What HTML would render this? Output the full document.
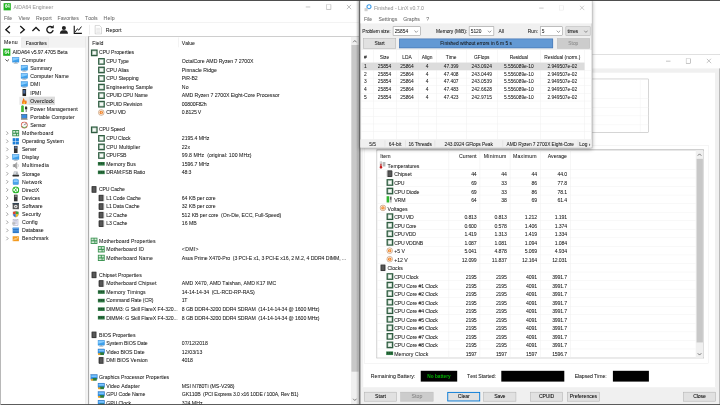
<!DOCTYPE html><html><head><meta charset="utf-8"><title>AIDA64 Engineer</title><style>
*{box-sizing:border-box;margin:0;padding:0}
html,body{width:720px;height:405px;overflow:hidden;background:#fff}
body{font-family:"Liberation Sans",sans-serif;font-size:11.5px;color:#000}
#root{filter:opacity(1);position:absolute;left:0;top:0;width:1600px;height:900px;transform:scale(.45);transform-origin:0 0;overflow:hidden;background:#fff}
.a{position:absolute}
.t{position:absolute;white-space:pre;line-height:18px;height:18px;font-kerning:none;-webkit-text-stroke:.09px;color:#141414}
.r{text-align:right}
.c{text-align:center}
.ic{position:absolute;width:16px;height:16px}
.cpu{position:absolute;width:15px;height:15px;border:3.800px solid #2f5c41;background:#f6faf6;outline:1px solid #9db8a6;outline-offset:-4.800px}
.btn{position:absolute;border:1px solid #adadad;background:#e1e1e1;text-align:center;white-space:pre}
.hl{position:absolute;height:1px;background:#f0f0f0}
.vl{position:absolute;width:1px;background:#f0f0f0}
</style></head><body><div id="root">
<div class="a" id="aida" style="left:0;top:0;width:798px;height:900px;background:#fff;overflow:hidden">
<div class="a" style="left:8px;top:7px;width:16px;height:16px;background:#21b421;color:#fff;font-size:10px;font-weight:bold;line-height:16px;text-align:center;letter-spacing:-.5px">64</div>
<div class="t" style="left:30px;top:7px;color:#999;letter-spacing:-0.057px">AIDA64 Engineer</div>
<svg class="a" style="left:770px;top:10px" width="12" height="12" viewBox="0 0 12 12"><path d="M0.500 0.500 L10.500 10.500 M10.500 0.500 L0.500 10.500" stroke="#8a8a8a" stroke-width="1.200" fill="none"/></svg>
<svg class="a" style="left:725px;top:10px" width="12" height="12" viewBox="0 0 12 12"><rect x="0.500" y="0.500" width="10" height="10" stroke="#8a8a8a" stroke-width="1.100" fill="none"/></svg>
<svg class="a" style="left:679px;top:10px" width="12" height="12" viewBox="0 0 12 12"><path d="M0 5.500 H10.500" stroke="#8a8a8a" stroke-width="1.100" fill="none"/></svg>
<div class="t" style="left:9px;top:32px;color:#6a6a6a;letter-spacing:-0.133px">File</div>
<div class="t" style="left:41px;top:32px;color:#6a6a6a;letter-spacing:0.018px">View</div>
<div class="t" style="left:80px;top:32px;color:#6a6a6a;letter-spacing:0.080px">Report</div>
<div class="t" style="left:128px;top:32px;color:#6a6a6a;letter-spacing:-0.032px">Favorites</div>
<div class="t" style="left:189px;top:32px;color:#6a6a6a;letter-spacing:-0.024px">Tools</div>
<div class="t" style="left:230px;top:32px;color:#6a6a6a;letter-spacing:0.337px">Help</div>
<div class="hl" style="left:0;top:50px;width:797px;background:#e4e4e4"></div>
<svg class="a" style="left:8px;top:55px" width="22" height="22" viewBox="0 0 22 22"><path d="M14 3 L5 11 L14 19" stroke="#1a1a1a" stroke-width="3" fill="none"/></svg>
<svg class="a" style="left:38px;top:55px" width="22" height="22" viewBox="0 0 22 22"><path d="M7 3 L16 11 L7 19" stroke="#1a1a1a" stroke-width="3" fill="none"/></svg>
<svg class="a" style="left:69px;top:55px" width="22" height="22" viewBox="0 0 22 22"><path d="M3 14 L11 6 L19 14" stroke="#1a1a1a" stroke-width="3" fill="none"/></svg>
<svg class="a" style="left:100px;top:55px" width="22" height="22" viewBox="0 0 22 22"><path d="M16.500 6.500 A7 7 0 1 0 18 12" stroke="#1a1a1a" stroke-width="3" fill="none"/><path d="M12 8 H19.500 V0.500 Z" fill="#1a1a1a"/></svg>
<svg class="a" style="left:131px;top:55px" width="22" height="22" viewBox="0 0 22 22"><circle cx="11" cy="7" r="4.5" fill="#222"/><path d="M2 20 C2 13 7 12 11 12 C15 12 20 13 20 20 Z" fill="#222"/></svg>
<svg class="a" style="left:162px;top:55px" width="22" height="22" viewBox="0 0 22 22"><path d="M3 2 V19 H20" stroke="#1a1a1a" stroke-width="2.600" fill="none"/><path d="M5 16 L10 9 L13 12 L19 4" stroke="#1a1a1a" stroke-width="2.200" fill="none"/></svg>
<div class="vl" style="left:198px;top:55px;height:22px;background:#d8d8d8"></div>
<svg class="a" style="left:208px;top:55px" width="22" height="22" viewBox="0 0 22 22"><path d="M3.5 1.5 H13 L17.500 6 V20.500 H3.500 Z" fill="#fff" stroke="#aaa"/><path d="M6 8 H15 M6 11 H15 M6 14 H15 M6 17 H15" stroke="#ccc" stroke-width="1"/></svg>
<div class="t" style="left:235px;top:57px;letter-spacing:0.080px">Report</div>
<div class="hl" style="left:0;top:81px;width:196px;background:#dedede"></div><div class="hl" style="left:196px;top:80.500px;width:602px;height:1.500px;background:#929292"></div>
<div class="a" style="left:0;top:82px;width:191px;height:24px;background:#f3f3f3"></div>
<div class="a" style="left:2px;top:82px;width:46px;height:25px;background:#fff"></div>
<div class="t" style="left:9px;top:83.500px;letter-spacing:0.558px">Menu</div>
<div class="a" style="left:48px;top:84px;width:60px;height:22px;background:#f0f0f0;border:1px solid #e4e4e4;border-bottom:none"></div>
<div class="t" style="left:57px;top:86.500px;letter-spacing:-0.032px">Favorites</div>
<div class="vl" style="left:190px;top:82px;height:818px;background:#dcdcdc"></div>
<div class="a" style="left:191px;top:82px;width:5px;height:818px;background:#f3f3f3"></div>
<div class="vl" style="left:196px;top:81px;height:819px;width:1.500px;background:#989898"></div>
<div class="a" style="left:7px;top:108px;width:16px;height:16px;background:#21b421;color:#fff;font-size:10px;font-weight:bold;line-height:16px;text-align:center;letter-spacing:-.5px">64</div>
<div class="t" style="left:28px;top:107px;letter-spacing:-0.209px">AIDA64 v5.97.4705 Beta</div>
<svg class="a" style="left:11px;top:129px" width="10" height="10" viewBox="0 0 10 10"><path d="M1 3 L5 7 L9 3" stroke="#333" stroke-width="1.8" fill="none"/></svg>
<svg class="a" style="left:27px;top:126px" width="16" height="16" viewBox="0 0 16 16"><rect x="0.500" y="1.500" width="15" height="10.500" fill="#3fa0ea" stroke="#2a84d4"/><path d="M1.500 2.500 H14.500 V5 L1.500 9 Z" fill="#86ccff"/><rect x="6" y="12.500" width="4" height="1.500" fill="#8a9aa8"/><rect x="3.500" y="14" width="9" height="1.500" fill="#a8b4be"/></svg>
<div class="t" style="left:49px;top:125px;letter-spacing:0.188px">Computer</div>
<svg class="a" style="left:46px;top:144px" width="16" height="16" viewBox="0 0 16 16"><rect x="0.500" y="1.500" width="15" height="10.500" fill="#3fa0ea" stroke="#2a84d4"/><path d="M1.500 2.500 H14.500 V5 L1.500 9 Z" fill="#86ccff"/><rect x="6" y="12.500" width="4" height="1.500" fill="#8a9aa8"/><rect x="3.500" y="14" width="9" height="1.500" fill="#a8b4be"/></svg>
<div class="t" style="left:67px;top:143px;letter-spacing:-0.029px">Summary</div>
<svg class="a" style="left:46px;top:162px" width="16" height="16" viewBox="0 0 16 16"><rect x="0.500" y="1.500" width="15" height="10.500" fill="#3fa0ea" stroke="#2a84d4"/><path d="M1.500 2.500 H14.500 V5 L1.500 9 Z" fill="#86ccff"/><rect x="6" y="12.500" width="4" height="1.500" fill="#8a9aa8"/><rect x="3.500" y="14" width="9" height="1.500" fill="#a8b4be"/></svg>
<div class="t" style="left:67px;top:161px;letter-spacing:0.126px">Computer Name</div>
<svg class="a" style="left:46px;top:180px" width="16" height="16" viewBox="0 0 16 16"><rect x="0.500" y="1.500" width="15" height="10.500" fill="#3fa0ea" stroke="#2a84d4"/><path d="M1.500 2.500 H14.500 V5 L1.500 9 Z" fill="#86ccff"/><rect x="6" y="12.500" width="4" height="1.500" fill="#8a9aa8"/><rect x="3.500" y="14" width="9" height="1.500" fill="#a8b4be"/></svg>
<div class="t" style="left:67px;top:179px;letter-spacing:0.307px">DMI</div>
<svg class="a" style="left:46px;top:198px" width="16" height="16" viewBox="0 0 16 16"><rect x="4" y="0" width="8" height="16" rx="1" fill="#222"/><rect x="5.5" y="2" width="5" height="8" fill="#4a6a9a"/></svg>
<div class="t" style="left:67px;top:197px;letter-spacing:0.090px">IPMI</div>
<div class="a" style="left:43px;top:215px;width:79px;height:18px;background:#e9e9e9"></div>
<div class="a" style="left:64px;top:215px;width:58px;height:18px;background:#dbdbdb"></div>
<svg class="a" style="left:46px;top:216px" width="16" height="16" viewBox="0 0 16 16"><path d="M3.500 15 C1.500 10 5 8 6 2 C9 5 8.500 8 10 9 C11 7.500 11 6.500 11.500 5.500 C14.500 10 13.500 13 12 15 Z" fill="#f27a1a"/><path d="M6 15 C5 12 7 11 7.500 9 C9 11 10 12 9.500 15 Z" fill="#ffc83a"/></svg>
<div class="t" style="left:67px;top:215px;letter-spacing:0.209px">Overclock</div>
<svg class="a" style="left:46px;top:234px" width="16" height="16" viewBox="0 0 16 16"><rect x="1" y="1" width="6" height="14" fill="#44b83a"/><rect x="2.500" y="0" width="3" height="1.500" fill="#2a8a2a"/><rect x="9.500" y="4" width="5" height="5" fill="#2a2a2a"/><rect x="10.500" y="1.500" width="1" height="3" fill="#2a2a2a"/><rect x="12.500" y="1.500" width="1" height="3" fill="#2a2a2a"/><rect x="11.300" y="9" width="1.500" height="6" fill="#2a2a2a"/></svg>
<div class="t" style="left:67px;top:233px;letter-spacing:0.193px">Power Management</div>
<svg class="a" style="left:46px;top:252px" width="16" height="16" viewBox="0 0 16 16"><rect x="2" y="2" width="12" height="9" fill="#3b8be0" stroke="#245"/><path d="M0 14 L2 11 H14 L16 14 Z" fill="#888"/></svg>
<div class="t" style="left:67px;top:251px;letter-spacing:0.146px">Portable Computer</div>
<svg class="a" style="left:46px;top:270px" width="16" height="16" viewBox="0 0 16 16"><circle cx="8" cy="8" r="7" fill="#f6f6f6" stroke="#c8321e" stroke-width="1.6"/><path d="M8 8 L12 4" stroke="#222" stroke-width="1.4"/><path d="M2.500 10 A6 6 0 0 0 13.500 10" stroke="#3a3" stroke-width="1.6" fill="none"/></svg>
<div class="t" style="left:67px;top:269px;letter-spacing:-0.240px">Sensor</div>
<svg class="a" style="left:11px;top:291px" width="10" height="10" viewBox="0 0 10 10"><path d="M3 1 L7 5 L3 9" stroke="#7a7a7a" stroke-width="1.5" fill="none"/></svg>
<svg class="a" style="left:27px;top:288px" width="16" height="16" viewBox="0 0 16 16"><rect x="0" y="1" width="16" height="14" fill="#36904d"/><rect x="2.300" y="3" width="4.700" height="4" fill="#d4ead8"/><rect x="9" y="3" width="4.700" height="4" fill="#d4ead8"/><rect x="2.300" y="9.300" width="6.500" height="3.700" fill="#d4ead8"/><rect x="10.800" y="9.300" width="2.900" height="3.700" fill="#d4ead8"/></svg>
<div class="t" style="left:49px;top:287px;letter-spacing:0.436px">Motherboard</div>
<svg class="a" style="left:11px;top:309px" width="10" height="10" viewBox="0 0 10 10"><path d="M3 1 L7 5 L3 9" stroke="#7a7a7a" stroke-width="1.5" fill="none"/></svg>
<svg class="a" style="left:27px;top:306px" width="16" height="16" viewBox="0 0 16 16"><rect x="1" y="1" width="6.500" height="6.500" fill="#1e7fd8"/><rect x="8.500" y="1" width="6.500" height="6.500" fill="#1e7fd8"/><rect x="1" y="8.500" width="6.500" height="6.500" fill="#1e7fd8"/><rect x="8.500" y="8.500" width="6.500" height="6.500" fill="#1e7fd8"/></svg>
<div class="t" style="left:49px;top:305px;letter-spacing:0.060px">Operating System</div>
<svg class="a" style="left:11px;top:327px" width="10" height="10" viewBox="0 0 10 10"><path d="M3 1 L7 5 L3 9" stroke="#7a7a7a" stroke-width="1.5" fill="none"/></svg>
<svg class="a" style="left:27px;top:324px" width="16" height="16" viewBox="0 0 16 16"><rect x="4" y="0" width="8" height="16" fill="#333"/><rect x="5.500" y="2" width="5" height="2" fill="#7af"/><rect x="5.500" y="6" width="5" height="1" fill="#999"/></svg>
<div class="t" style="left:49px;top:323px;letter-spacing:-0.312px">Server</div>
<svg class="a" style="left:11px;top:345px" width="10" height="10" viewBox="0 0 10 10"><path d="M3 1 L7 5 L3 9" stroke="#7a7a7a" stroke-width="1.5" fill="none"/></svg>
<svg class="a" style="left:27px;top:342px" width="16" height="16" viewBox="0 0 16 16"><rect x="0.500" y="1.500" width="15" height="10.500" fill="#3fa0ea" stroke="#2a84d4"/><path d="M1.500 2.500 H14.500 V5 L1.500 9 Z" fill="#86ccff"/><rect x="6" y="12.500" width="4" height="1.500" fill="#8a9aa8"/><rect x="3.500" y="14" width="9" height="1.500" fill="#a8b4be"/></svg>
<div class="t" style="left:49px;top:341px;letter-spacing:0.042px">Display</div>
<svg class="a" style="left:11px;top:363px" width="10" height="10" viewBox="0 0 10 10"><path d="M3 1 L7 5 L3 9" stroke="#7a7a7a" stroke-width="1.5" fill="none"/></svg>
<svg class="a" style="left:27px;top:360px" width="16" height="16" viewBox="0 0 16 16"><path d="M2 5.500 H5.500 L10.500 1 V15 L5.500 10.500 H2 Z" fill="#b4b4b4" stroke="#7a7a7a" stroke-width=".8"/><path d="M6 5 V11" stroke="#555" stroke-width="1.200"/><path d="M12.500 4.500 C14.500 7 14.500 9 12.500 11.500" stroke="#aaa" fill="none" stroke-width="1.300"/></svg>
<div class="t" style="left:49px;top:359px;letter-spacing:0.440px">Multimedia</div>
<svg class="a" style="left:11px;top:381px" width="10" height="10" viewBox="0 0 10 10"><path d="M3 1 L7 5 L3 9" stroke="#7a7a7a" stroke-width="1.5" fill="none"/></svg>
<svg class="a" style="left:27px;top:378px" width="16" height="16" viewBox="0 0 16 16"><path d="M2 11 L4.500 3 H11.500 L14 11 Z" fill="#d4d8dc" stroke="#a8acb0" stroke-width=".8"/><rect x="1" y="10.500" width="14" height="4" rx="1" fill="#2e2e2e"/><rect x="9" y="5" width="3" height="4" fill="#9aa0a6"/></svg>
<div class="t" style="left:49px;top:377px;letter-spacing:-0.040px">Storage</div>
<svg class="a" style="left:11px;top:399px" width="10" height="10" viewBox="0 0 10 10"><path d="M3 1 L7 5 L3 9" stroke="#7a7a7a" stroke-width="1.5" fill="none"/></svg>
<svg class="a" style="left:27px;top:396px" width="16" height="16" viewBox="0 0 16 16"><rect x="2" y="3" width="12" height="11" rx="1" fill="#4aa3ec" stroke="#2f86d0" stroke-width="1"/><rect x="3.500" y="4.500" width="9" height="4" fill="#8ccbfa"/><rect x="5" y="1" width="6" height="2.500" fill="#6fb8f2"/></svg>
<div class="t" style="left:49px;top:395px;letter-spacing:0.403px">Network</div>
<svg class="a" style="left:11px;top:417px" width="10" height="10" viewBox="0 0 10 10"><path d="M3 1 L7 5 L3 9" stroke="#7a7a7a" stroke-width="1.5" fill="none"/></svg>
<svg class="a" style="left:27px;top:414px" width="16" height="16" viewBox="0 0 16 16"><circle cx="8" cy="8" r="6.600" fill="#fff" stroke="#1fb41f" stroke-width="2.400"/><path d="M4 3.500 C7 6 9 9 11.500 13 M12 3.500 C9 6 7 9 4.500 13" stroke="#1fb41f" stroke-width="1.700" fill="none"/></svg>
<div class="t" style="left:49px;top:413px;letter-spacing:0.043px">DirectX</div>
<svg class="a" style="left:11px;top:435px" width="10" height="10" viewBox="0 0 10 10"><path d="M3 1 L7 5 L3 9" stroke="#7a7a7a" stroke-width="1.5" fill="none"/></svg>
<svg class="a" style="left:27px;top:432px" width="16" height="16" viewBox="0 0 16 16"><rect x="4" y="0" width="8" height="16" fill="#333"/><rect x="5.500" y="2" width="5" height="4" fill="#888"/></svg>
<div class="t" style="left:49px;top:431px;letter-spacing:-0.129px">Devices</div>
<svg class="a" style="left:11px;top:453px" width="10" height="10" viewBox="0 0 10 10"><path d="M3 1 L7 5 L3 9" stroke="#7a7a7a" stroke-width="1.5" fill="none"/></svg>
<svg class="a" style="left:27px;top:450px" width="16" height="16" viewBox="0 0 16 16"><rect x="1" y="1" width="14" height="14" fill="#555"/><circle cx="8" cy="9" r="4" fill="#ddd"/><circle cx="8" cy="9" r="1.500" fill="#555"/><rect x="1" y="1" width="14" height="3" fill="#345"/></svg>
<div class="t" style="left:49px;top:449px;letter-spacing:0.077px">Software</div>
<svg class="a" style="left:11px;top:471px" width="10" height="10" viewBox="0 0 10 10"><path d="M3 1 L7 5 L3 9" stroke="#7a7a7a" stroke-width="1.5" fill="none"/></svg>
<svg class="a" style="left:27px;top:468px" width="16" height="16" viewBox="0 0 16 16"><path d="M8 0 L15 2 V8 C15 12 11 15 8 16 C5 15 1 12 1 8 V2 Z" fill="#c9c9c9"/><path d="M8 1.500 V8 H2 V3 Z" fill="#e0402a"/><path d="M8 1.500 V8 H14 V3 Z" fill="#3aa83a"/><path d="M2 8 H8 V14.800 C5 13.500 2.500 11.500 2 8 Z" fill="#2a6fd8"/><path d="M14 8 H8 V14.800 C11 13.500 13.500 11.500 14 8 Z" fill="#f0b820"/></svg>
<div class="t" style="left:49px;top:467px;letter-spacing:0.057px">Security</div>
<svg class="a" style="left:11px;top:489px" width="10" height="10" viewBox="0 0 10 10"><path d="M3 1 L7 5 L3 9" stroke="#7a7a7a" stroke-width="1.5" fill="none"/></svg>
<svg class="a" style="left:27px;top:486px" width="16" height="16" viewBox="0 0 16 16"><rect x="2" y="1" width="11" height="14" fill="#eef" stroke="#99a"/><path d="M4 4 H11 M4 7 H11 M4 10 H11" stroke="#99a"/><rect x="0" y="8" width="7" height="5" fill="#bbb"/></svg>
<div class="t" style="left:49px;top:485px;letter-spacing:0.293px">Config</div>
<svg class="a" style="left:11px;top:507px" width="10" height="10" viewBox="0 0 10 10"><path d="M3 1 L7 5 L3 9" stroke="#7a7a7a" stroke-width="1.5" fill="none"/></svg>
<svg class="a" style="left:27px;top:504px" width="16" height="16" viewBox="0 0 16 16"><rect x="1" y="2" width="14" height="12" fill="#2d78c8"/><rect x="1" y="2" width="14" height="3" fill="#5aa0e8"/><path d="M1 9 H15" stroke="#9cf"/></svg>
<div class="t" style="left:49px;top:503px;letter-spacing:-0.154px">Database</div>
<svg class="a" style="left:11px;top:525px" width="10" height="10" viewBox="0 0 10 10"><path d="M3 1 L7 5 L3 9" stroke="#7a7a7a" stroke-width="1.5" fill="none"/></svg>
<svg class="a" style="left:27px;top:522px" width="16" height="16" viewBox="0 0 16 16"><rect x="1" y="3" width="14" height="11" fill="#f39a1e"/><path d="M3 12 L6 8 L9 10 L13 5" stroke="#fff" stroke-width="1.4" fill="none"/></svg>
<div class="t" style="left:49px;top:521px;letter-spacing:0.093px">Benchmark</div>
<div class="t" style="left:205px;top:86px;letter-spacing:0.015px">Field</div>
<div class="vl" style="left:396px;top:83px;height:22px;background:#e5e5e5"></div>
<div class="t" style="left:404px;top:86px;letter-spacing:-0.083px">Value</div>
<div class="cpu" style="left:202px;top:110px"></div>
<div class="t" style="left:220px;top:108px;letter-spacing:-0.135px">CPU Properties</div>
<div class="cpu" style="left:218px;top:129px"></div>
<div class="t" style="left:236px;top:127px;letter-spacing:-0.380px">CPU Type</div>
<div class="t" style="left:404px;top:127px;letter-spacing:-0.124px">OctalCore AMD Ryzen 7 2700X</div>
<div class="cpu" style="left:218px;top:148px"></div>
<div class="t" style="left:236px;top:146px;letter-spacing:-0.267px">CPU Alias</div>
<div class="t" style="left:404px;top:146px;letter-spacing:0.046px">Pinnacle Ridge</div>
<div class="cpu" style="left:218px;top:167px"></div>
<div class="t" style="left:236px;top:165px;letter-spacing:-0.073px">CPU Stepping</div>
<div class="t" style="left:404px;top:165px;letter-spacing:-0.238px">PiR-B2</div>
<div class="cpu" style="left:218px;top:186px"></div>
<div class="t" style="left:236px;top:184px;letter-spacing:0.024px">Engineering Sample</div>
<div class="t" style="left:404px;top:184px;letter-spacing:0.650px">No</div>
<div class="cpu" style="left:218px;top:205px"></div>
<div class="t" style="left:236px;top:203px;letter-spacing:-0.366px">CPUID CPU Name</div>
<div class="t" style="left:404px;top:203px;letter-spacing:-0.092px">AMD Ryzen 7 2700X Eight-Core Processor</div>
<div class="cpu" style="left:218px;top:224px"></div>
<div class="t" style="left:236px;top:222px;letter-spacing:-0.220px">CPUID Revision</div>
<div class="t" style="left:404px;top:222px;letter-spacing:-0.355px">00800F82h</div>
<svg class="a" style="left:217px;top:242px" width="16" height="16" viewBox="0 0 16 16"><circle cx="8" cy="8" r="6.300" fill="#fdf6ee" stroke="#b9845a" stroke-width="1.300"/><circle cx="8" cy="8" r="3.800" fill="#f0812a"/><path d="M9 4 L6.500 8.500 H8 L7.200 12 L10 7.500 H8.300 Z" fill="#ffe0b0"/></svg>
<div class="t" style="left:236px;top:241px;letter-spacing:-0.521px">CPU VID</div>
<div class="t" style="left:404px;top:241px;letter-spacing:-0.380px">0.8125 V</div>
<div class="cpu" style="left:202px;top:281px"></div>
<div class="t" style="left:220px;top:279px;letter-spacing:-0.414px">CPU Speed</div>
<div class="cpu" style="left:218px;top:300px"></div>
<div class="t" style="left:236px;top:298px;letter-spacing:-0.248px">CPU Clock</div>
<div class="t" style="left:404px;top:298px;letter-spacing:-0.100px">2195.4 MHz</div>
<div class="cpu" style="left:218px;top:319px"></div>
<div class="t" style="left:236px;top:317px;letter-spacing:0.179px">CPU Multiplier</div>
<div class="t" style="left:404px;top:317px;letter-spacing:-0.181px">22x</div>
<div class="cpu" style="left:218px;top:338px"></div>
<div class="t" style="left:236px;top:336px;letter-spacing:-0.834px">CPU FSB</div>
<div class="t" style="left:404px;top:336px;letter-spacing:0.078px">99.8 MHz  (original: 100 MHz)</div>
<svg class="a" style="left:217px;top:356px" width="16" height="16" viewBox="0 0 16 16"><rect x="0" y="4" width="16" height="8" fill="#2f7a45"/><rect x="2" y="5.500" width="3" height="3.500" fill="#1d4d2a"/><rect x="6.500" y="5.500" width="3" height="3.500" fill="#1d4d2a"/><rect x="11" y="5.500" width="3" height="3.500" fill="#1d4d2a"/></svg>
<div class="t" style="left:236px;top:355px;letter-spacing:0.146px">Memory Bus</div>
<div class="t" style="left:404px;top:355px;letter-spacing:-0.100px">1596.7 MHz</div>
<svg class="a" style="left:217px;top:375px" width="16" height="16" viewBox="0 0 16 16"><rect x="0" y="4" width="16" height="8" fill="#2f7a45"/><rect x="2" y="5.500" width="3" height="3.500" fill="#1d4d2a"/><rect x="6.500" y="5.500" width="3" height="3.500" fill="#1d4d2a"/><rect x="11" y="5.500" width="3" height="3.500" fill="#1d4d2a"/></svg>
<div class="t" style="left:236px;top:374px;letter-spacing:-0.247px">DRAM:FSB Ratio</div>
<div class="t" style="left:404px;top:374px;letter-spacing:-0.346px">48:3</div>
<svg class="a" style="left:201px;top:413px" width="16" height="16" viewBox="0 0 16 16"><rect x="3" y="0.500" width="10" height="15" fill="#3c3c3c"/><rect x="1.500" y="1.500" width="1.500" height="13" fill="#8a8a8a"/><rect x="13" y="1.500" width="1.500" height="13" fill="#8a8a8a"/><rect x="5" y="3" width="6" height="10" fill="#585858"/></svg>
<div class="t" style="left:220px;top:412px;letter-spacing:-0.413px">CPU Cache</div>
<svg class="a" style="left:217px;top:432px" width="16" height="16" viewBox="0 0 16 16"><rect x="3" y="0.500" width="10" height="15" fill="#3c3c3c"/><rect x="1.500" y="1.500" width="1.500" height="13" fill="#8a8a8a"/><rect x="13" y="1.500" width="1.500" height="13" fill="#8a8a8a"/><rect x="5" y="3" width="6" height="10" fill="#585858"/></svg>
<div class="t" style="left:236px;top:431px;letter-spacing:-0.224px">L1 Code Cache</div>
<div class="t" style="left:404px;top:431px;letter-spacing:-0.122px">64 KB per core</div>
<svg class="a" style="left:217px;top:451px" width="16" height="16" viewBox="0 0 16 16"><rect x="3" y="0.500" width="10" height="15" fill="#3c3c3c"/><rect x="1.500" y="1.500" width="1.500" height="13" fill="#8a8a8a"/><rect x="13" y="1.500" width="1.500" height="13" fill="#8a8a8a"/><rect x="5" y="3" width="6" height="10" fill="#585858"/></svg>
<div class="t" style="left:236px;top:450px;letter-spacing:-0.209px">L1 Data Cache</div>
<div class="t" style="left:404px;top:450px;letter-spacing:-0.122px">32 KB per core</div>
<svg class="a" style="left:217px;top:470px" width="16" height="16" viewBox="0 0 16 16"><rect x="3" y="0.500" width="10" height="15" fill="#3c3c3c"/><rect x="1.500" y="1.500" width="1.500" height="13" fill="#8a8a8a"/><rect x="13" y="1.500" width="1.500" height="13" fill="#8a8a8a"/><rect x="5" y="3" width="6" height="10" fill="#585858"/></svg>
<div class="t" style="left:236px;top:469px;letter-spacing:-0.279px">L2 Cache</div>
<div class="t" style="left:404px;top:469px;letter-spacing:-0.125px">512 KB per core  (On-Die, ECC, Full-Speed)</div>
<svg class="a" style="left:217px;top:489px" width="16" height="16" viewBox="0 0 16 16"><rect x="3" y="0.500" width="10" height="15" fill="#3c3c3c"/><rect x="1.500" y="1.500" width="1.500" height="13" fill="#8a8a8a"/><rect x="13" y="1.500" width="1.500" height="13" fill="#8a8a8a"/><rect x="5" y="3" width="6" height="10" fill="#585858"/></svg>
<div class="t" style="left:236px;top:488px;letter-spacing:-0.279px">L3 Cache</div>
<div class="t" style="left:404px;top:488px;letter-spacing:-0.047px">16 MB</div>
<svg class="a" style="left:201px;top:527px" width="16" height="16" viewBox="0 0 16 16"><rect x="0" y="1" width="16" height="14" fill="#36904d"/><rect x="2.300" y="3" width="4.700" height="4" fill="#d4ead8"/><rect x="9" y="3" width="4.700" height="4" fill="#d4ead8"/><rect x="2.300" y="9.300" width="6.500" height="3.700" fill="#d4ead8"/><rect x="10.800" y="9.300" width="2.900" height="3.700" fill="#d4ead8"/></svg>
<div class="t" style="left:220px;top:526px;letter-spacing:0.236px">Motherboard Properties</div>
<svg class="a" style="left:217px;top:546px" width="16" height="16" viewBox="0 0 16 16"><rect x="0" y="1" width="16" height="14" fill="#36904d"/><rect x="2.300" y="3" width="4.700" height="4" fill="#d4ead8"/><rect x="9" y="3" width="4.700" height="4" fill="#d4ead8"/><rect x="2.300" y="9.300" width="6.500" height="3.700" fill="#d4ead8"/><rect x="10.800" y="9.300" width="2.900" height="3.700" fill="#d4ead8"/></svg>
<div class="t" style="left:236px;top:545px;letter-spacing:0.293px">Motherboard ID</div>
<div class="t" style="left:404px;top:545px;letter-spacing:0.698px">&lt;DMI&gt;</div>
<svg class="a" style="left:217px;top:565px" width="16" height="16" viewBox="0 0 16 16"><rect x="0" y="1" width="16" height="14" fill="#36904d"/><rect x="2.300" y="3" width="4.700" height="4" fill="#d4ead8"/><rect x="9" y="3" width="4.700" height="4" fill="#d4ead8"/><rect x="2.300" y="9.300" width="6.500" height="3.700" fill="#d4ead8"/><rect x="10.800" y="9.300" width="2.900" height="3.700" fill="#d4ead8"/></svg>
<div class="t" style="left:236px;top:564px;letter-spacing:0.308px">Motherboard Name</div>
<div class="t" style="left:404px;top:564px;letter-spacing:-0.172px">Asus Prime X470-Pro  (3 PCI-E x1, 3 PCI-E x16, 2 M.2, 4 DDR4 DIMM, ...</div>
<svg class="a" style="left:201px;top:603px" width="16" height="16" viewBox="0 0 16 16"><rect x="3" y="0.500" width="10" height="15" fill="#3c3c3c"/><rect x="1.500" y="1.500" width="1.500" height="13" fill="#8a8a8a"/><rect x="13" y="1.500" width="1.500" height="13" fill="#8a8a8a"/><rect x="5" y="3" width="6" height="10" fill="#585858"/></svg>
<div class="t" style="left:220px;top:602px;letter-spacing:0.022px">Chipset Properties</div>
<svg class="a" style="left:217px;top:622px" width="16" height="16" viewBox="0 0 16 16"><rect x="3" y="0.500" width="10" height="15" fill="#3c3c3c"/><rect x="1.500" y="1.500" width="1.500" height="13" fill="#8a8a8a"/><rect x="13" y="1.500" width="1.500" height="13" fill="#8a8a8a"/><rect x="5" y="3" width="6" height="10" fill="#585858"/></svg>
<div class="t" style="left:236px;top:621px;letter-spacing:0.243px">Motherboard Chipset</div>
<div class="t" style="left:404px;top:621px;letter-spacing:-0.045px">AMD X470, AMD Taishan, AMD K17 IMC</div>
<svg class="a" style="left:217px;top:641px" width="16" height="16" viewBox="0 0 16 16"><rect x="0" y="4" width="16" height="8" fill="#2f7a45"/><rect x="2" y="5.500" width="3" height="3.500" fill="#1d4d2a"/><rect x="6.500" y="5.500" width="3" height="3.500" fill="#1d4d2a"/><rect x="11" y="5.500" width="3" height="3.500" fill="#1d4d2a"/></svg>
<div class="t" style="left:236px;top:640px;letter-spacing:0.216px">Memory Timings</div>
<div class="t" style="left:404px;top:640px;letter-spacing:-0.194px">14-14-14-34  (CL-RCD-RP-RAS)</div>
<svg class="a" style="left:217px;top:660px" width="16" height="16" viewBox="0 0 16 16"><rect x="0" y="4" width="16" height="8" fill="#2f7a45"/><rect x="2" y="5.500" width="3" height="3.500" fill="#1d4d2a"/><rect x="6.500" y="5.500" width="3" height="3.500" fill="#1d4d2a"/><rect x="11" y="5.500" width="3" height="3.500" fill="#1d4d2a"/></svg>
<div class="t" style="left:236px;top:659px;letter-spacing:-0.176px">Command Rate (CR)</div>
<div class="t" style="left:404px;top:659px;letter-spacing:-0.710px">1T</div>
<svg class="a" style="left:217px;top:679px" width="16" height="16" viewBox="0 0 16 16"><rect x="0" y="4" width="16" height="8" fill="#2f7a45"/><rect x="2" y="5.500" width="3" height="3.500" fill="#1d4d2a"/><rect x="6.500" y="5.500" width="3" height="3.500" fill="#1d4d2a"/><rect x="11" y="5.500" width="3" height="3.500" fill="#1d4d2a"/></svg>
<div class="t" style="left:236px;top:678px;letter-spacing:-0.128px">DIMM3: G Skill FlareX F4-320...</div>
<div class="t" style="left:404px;top:678px;letter-spacing:-0.207px">8 GB DDR4-3200 DDR4 SDRAM  (14-14-14-34 @ 1600 MHz)</div>
<svg class="a" style="left:217px;top:698px" width="16" height="16" viewBox="0 0 16 16"><rect x="0" y="4" width="16" height="8" fill="#2f7a45"/><rect x="2" y="5.500" width="3" height="3.500" fill="#1d4d2a"/><rect x="6.500" y="5.500" width="3" height="3.500" fill="#1d4d2a"/><rect x="11" y="5.500" width="3" height="3.500" fill="#1d4d2a"/></svg>
<div class="t" style="left:236px;top:697px;letter-spacing:-0.128px">DIMM4: G Skill FlareX F4-320...</div>
<div class="t" style="left:404px;top:697px;letter-spacing:-0.207px">8 GB DDR4-3200 DDR4 SDRAM  (14-14-14-34 @ 1600 MHz)</div>
<svg class="a" style="left:201px;top:736px" width="16" height="16" viewBox="0 0 16 16"><rect x="3" y="0.500" width="10" height="15" fill="#3c3c3c"/><rect x="1.500" y="1.500" width="1.500" height="13" fill="#8a8a8a"/><rect x="13" y="1.500" width="1.500" height="13" fill="#8a8a8a"/><rect x="5" y="3" width="6" height="10" fill="#585858"/></svg>
<div class="t" style="left:220px;top:735px;letter-spacing:-0.139px">BIOS Properties</div>
<svg class="a" style="left:217px;top:755px" width="16" height="16" viewBox="0 0 16 16"><rect x="0.500" y="1.500" width="15" height="10.500" fill="#3fa0ea" stroke="#2a84d4"/><path d="M1.500 2.500 H14.500 V5 L1.500 9 Z" fill="#86ccff"/><rect x="6" y="12.500" width="4" height="1.500" fill="#8a9aa8"/><rect x="3.500" y="14" width="9" height="1.500" fill="#a8b4be"/></svg>
<div class="t" style="left:236px;top:754px;letter-spacing:-0.281px">System BIOS Date</div>
<div class="t" style="left:404px;top:754px;letter-spacing:0.044px">07/12/2018</div>
<svg class="a" style="left:217px;top:774px" width="16" height="16" viewBox="0 0 16 16"><rect x="0.5" y="1.5" width="15" height="10" fill="#2f8fe0" stroke="#1b5fae"/><rect x="2" y="3" width="12" height="4" fill="#7cc4ff"/><rect x="5" y="9" width="9" height="6" fill="#2c7a3a"/><rect x="1" y="11" width="5" height="4" fill="#e0a020"/></svg>
<div class="t" style="left:236px;top:773px;letter-spacing:-0.172px">Video BIOS Date</div>
<div class="t" style="left:404px;top:773px;letter-spacing:0.154px">12/03/13</div>
<svg class="a" style="left:217px;top:793px" width="16" height="16" viewBox="0 0 16 16"><rect x="3" y="0.500" width="10" height="15" fill="#3c3c3c"/><rect x="1.500" y="1.500" width="1.500" height="13" fill="#8a8a8a"/><rect x="13" y="1.500" width="1.500" height="13" fill="#8a8a8a"/><rect x="5" y="3" width="6" height="10" fill="#585858"/></svg>
<div class="t" style="left:236px;top:792px;letter-spacing:-0.121px">DMI BIOS Version</div>
<div class="t" style="left:404px;top:792px;letter-spacing:-0.396px">4018</div>
<svg class="a" style="left:201px;top:831px" width="16" height="16" viewBox="0 0 16 16"><rect x="0.5" y="1.5" width="15" height="10" fill="#2f8fe0" stroke="#1b5fae"/><rect x="2" y="3" width="12" height="4" fill="#7cc4ff"/><rect x="5" y="9" width="9" height="6" fill="#2c7a3a"/><rect x="1" y="11" width="5" height="4" fill="#e0a020"/></svg>
<div class="t" style="left:220px;top:830px;letter-spacing:-0.020px">Graphics Processor Properties</div>
<svg class="a" style="left:217px;top:850px" width="16" height="16" viewBox="0 0 16 16"><rect x="0.5" y="1.5" width="15" height="10" fill="#2f8fe0" stroke="#1b5fae"/><rect x="2" y="3" width="12" height="4" fill="#7cc4ff"/><rect x="5" y="9" width="9" height="6" fill="#2c7a3a"/><rect x="1" y="11" width="5" height="4" fill="#e0a020"/></svg>
<div class="t" style="left:236px;top:849px;letter-spacing:0.163px">Video Adapter</div>
<div class="t" style="left:404px;top:849px;letter-spacing:-0.125px">MSI N780Ti (MS-V298)</div>
<svg class="a" style="left:217px;top:869px" width="16" height="16" viewBox="0 0 16 16"><rect x="0.5" y="1.5" width="15" height="10" fill="#2f8fe0" stroke="#1b5fae"/><rect x="2" y="3" width="12" height="4" fill="#7cc4ff"/><rect x="5" y="9" width="9" height="6" fill="#2c7a3a"/><rect x="1" y="11" width="5" height="4" fill="#e0a020"/></svg>
<div class="t" style="left:236px;top:868px;letter-spacing:-0.191px">GPU Code Name</div>
<div class="t" style="left:404px;top:868px;letter-spacing:-0.324px">GK110B  (PCI Express 3.0 x16 10DE / 100A, Rev B1)</div>
<svg class="a" style="left:217px;top:888px" width="16" height="16" viewBox="0 0 16 16"><rect x="0.5" y="1.5" width="15" height="10" fill="#2f8fe0" stroke="#1b5fae"/><rect x="2" y="3" width="12" height="4" fill="#7cc4ff"/><rect x="5" y="9" width="9" height="6" fill="#2c7a3a"/><rect x="1" y="11" width="5" height="4" fill="#e0a020"/></svg>
<div class="t" style="left:236px;top:887px;letter-spacing:-0.208px">GPU Clock</div>
<div class="t" style="left:404px;top:887px;letter-spacing:-0.002px">324 MHz</div>
<div class="a" style="left:780px;top:82px;width:18px;height:818px;background:#f0f0f0"></div>
<svg class="a" style="left:783px;top:87px" width="11" height="10" viewBox="0 0 11 10"><path d="M1.500 7 L5.500 3 L9.500 7" stroke="#505050" stroke-width="1.6" fill="none"/></svg>
<svg class="a" style="left:783px;top:883px" width="11" height="10" viewBox="0 0 11 10"><path d="M1.500 3 L5.500 7 L9.500 3" stroke="#505050" stroke-width="1.6" fill="none"/></svg>
<div class="a" style="left:781px;top:100px;width:16px;height:726px;background:#c8c8c8"></div>
</div>
<div class="a" id="stab" style="left:798px;top:120px;width:802px;height:780px;background:#f0f0f0;border-top:2px solid #b4b4b4;border-right:2px solid #b4b4b4">
</div>
<div class="a" style="left:799px;top:121px;width:801px;height:31px;background:#fff"></div>
<svg class="a" style="left:1480px;top:130px" width="12" height="12" viewBox="0 0 12 12"><path d="M0 6 H10" stroke="#888" stroke-width="1.1" fill="none"/></svg>
<svg class="a" style="left:1524px;top:130px" width="12" height="12" viewBox="0 0 12 12"><rect x="0.5" y="0.500" width="10" height="10" stroke="#888" stroke-width="1.1" fill="none"/></svg>
<svg class="a" style="left:1570px;top:130px" width="12" height="12" viewBox="0 0 12 12"><path d="M0 0 L10.500 10.500 M10.500 0 L0 10.500" stroke="#888" stroke-width="1.1" fill="none"/></svg>
<div class="a" style="left:806px;top:160px;width:784px;height:702px;background:#fff;border:1px solid #e6e6e6"></div>
<div class="a" style="left:1100px;top:175px;width:342px;height:120px;background:#fff;border:1.500px solid #a4a4a4"></div>
<div class="hl" style="left:1101px;top:218.0px;width:340px"></div>
<div class="hl" style="left:1101px;top:237.5px;width:340px"></div>
<div class="hl" style="left:1101px;top:257.0px;width:340px"></div>
<div class="hl" style="left:1101px;top:276.5px;width:340px"></div>
<div class="vl" style="left:1422px;top:177px;height:116px"></div>
<div class="a" style="left:810px;top:323px;width:765px;height:485px;border:1px solid #e8e8e8;background:#fff"></div>
<div class="a" style="left:837px;top:332px;width:727px;height:464px;border:1px solid #9c9c9c;border-top:2px solid #b0b0b0;background:#fff"></div>
<div class="t" style="left:845px;top:337px;letter-spacing:0.159px">Item</div>
<div class="t r" style="left:997px;width:62px;top:337px;letter-spacing:0.093px">Current</div>
<div class="t r" style="left:1066px;width:60px;top:337px;letter-spacing:0.623px">Minimum</div>
<div class="t r" style="left:1133px;width:60px;top:337px;letter-spacing:0.452px">Maximum</div>
<div class="t r" style="left:1200px;width:60px;top:337px;letter-spacing:0.024px">Average</div>
<div class="vl" style="left:997px;top:334px;height:461px;background:#ececec"></div>
<div class="vl" style="left:1066px;top:334px;height:461px;background:#ececec"></div>
<div class="vl" style="left:1133px;top:334px;height:461px;background:#ececec"></div>
<div class="vl" style="left:1200px;top:334px;height:461px;background:#ececec"></div>
<div class="vl" style="left:1267px;top:334px;height:461px;background:#ececec"></div>
<div class="hl" style="left:838px;top:376px;width:708px;background:#f0f0f0"></div>
<svg class="a" style="left:843px;top:359px" width="16" height="16" viewBox="0 0 16 16"><rect x="1.500" y="0.500" width="4" height="12" fill="#e8e8e8" stroke="#8a8a8a" stroke-width=".8"/><circle cx="3.500" cy="13" r="3" fill="#c81e1e"/><rect x="2.300" y="5" width="2.400" height="8" fill="#c81e1e"/><rect x="7.500" y="1" width="2.200" height="10" fill="#9a9a9a"/><rect x="11" y="1" width="2.200" height="10" fill="#9a9a9a"/></svg>
<div class="t" style="left:861px;top:359.5px;letter-spacing:-0.049px">Temperatures</div>
<div class="hl" style="left:838px;top:395px;width:708px;background:#f0f0f0"></div>
<svg class="a" style="left:858px;top:378px" width="16" height="16" viewBox="0 0 16 16"><rect x="3" y="0.500" width="10" height="15" fill="#3c3c3c"/><rect x="1.500" y="1.500" width="1.500" height="13" fill="#8a8a8a"/><rect x="13" y="1.500" width="1.500" height="13" fill="#8a8a8a"/><rect x="5" y="3" width="6" height="10" fill="#585858"/></svg>
<div class="t" style="left:876px;top:378.5px;letter-spacing:0.001px">Chipset</div>
<div class="t r" style="left:997px;width:62px;top:378.5px;letter-spacing:-0.396px">44</div>
<div class="t r" style="left:1066px;width:60px;top:378.5px;letter-spacing:-0.396px">44</div>
<div class="t r" style="left:1133px;width:60px;top:378.5px;letter-spacing:-0.396px">44</div>
<div class="t r" style="left:1200px;width:60px;top:378.5px;letter-spacing:-0.346px">44.0</div>
<div class="hl" style="left:838px;top:414px;width:708px;background:#f0f0f0"></div>
<div class="cpu" style="left:859px;top:398px"></div>
<div class="t" style="left:876px;top:397.5px;letter-spacing:-0.760px">CPU</div>
<div class="t r" style="left:997px;width:62px;top:397.5px;letter-spacing:-0.396px">69</div>
<div class="t r" style="left:1066px;width:60px;top:397.5px;letter-spacing:-0.396px">33</div>
<div class="t r" style="left:1133px;width:60px;top:397.5px;letter-spacing:-0.396px">86</div>
<div class="t r" style="left:1200px;width:60px;top:397.5px;letter-spacing:-0.346px">77.8</div>
<div class="hl" style="left:838px;top:433px;width:708px;background:#f0f0f0"></div>
<div class="cpu" style="left:859px;top:417px"></div>
<div class="t" style="left:876px;top:416.5px;letter-spacing:-0.169px">CPU Diode</div>
<div class="t r" style="left:997px;width:62px;top:416.5px;letter-spacing:-0.396px">69</div>
<div class="t r" style="left:1066px;width:60px;top:416.5px;letter-spacing:-0.396px">33</div>
<div class="t r" style="left:1133px;width:60px;top:416.5px;letter-spacing:-0.396px">86</div>
<div class="t r" style="left:1200px;width:60px;top:416.5px;letter-spacing:-0.346px">78.1</div>
<div class="hl" style="left:838px;top:452px;width:708px;background:#f0f0f0"></div>
<svg class="a" style="left:858px;top:435px" width="16" height="16" viewBox="0 0 16 16"><rect x="1" y="1" width="6" height="14" fill="#2fb52f"/><rect x="9" y="2" width="3" height="7" fill="#444"/><rect x="10" y="9" width="1.500" height="6" fill="#444"/></svg>
<div class="t" style="left:876px;top:435.5px;letter-spacing:-0.185px">VRM</div>
<div class="t r" style="left:997px;width:62px;top:435.5px;letter-spacing:-0.396px">64</div>
<div class="t r" style="left:1066px;width:60px;top:435.5px;letter-spacing:-0.396px">38</div>
<div class="t r" style="left:1133px;width:60px;top:435.5px;letter-spacing:-0.396px">69</div>
<div class="t r" style="left:1200px;width:60px;top:435.5px;letter-spacing:-0.346px">61.4</div>
<div class="hl" style="left:838px;top:471px;width:708px;background:#f0f0f0"></div>
<svg class="a" style="left:843px;top:454px" width="16" height="16" viewBox="0 0 16 16"><circle cx="8" cy="8" r="6.300" fill="#fdf6ee" stroke="#b9845a" stroke-width="1.300"/><circle cx="8" cy="8" r="3.800" fill="#f0812a"/><path d="M9 4 L6.500 8.500 H8 L7.200 12 L10 7.500 H8.300 Z" fill="#ffe0b0"/></svg>
<div class="t" style="left:861px;top:454.5px;letter-spacing:0.031px">Voltages</div>
<div class="hl" style="left:838px;top:490px;width:708px;background:#f0f0f0"></div>
<div class="cpu" style="left:859px;top:474px"></div>
<div class="t" style="left:876px;top:473.5px;letter-spacing:-0.521px">CPU VID</div>
<div class="t r" style="left:997px;width:62px;top:473.5px;letter-spacing:-0.356px">0.813</div>
<div class="t r" style="left:1066px;width:60px;top:473.5px;letter-spacing:-0.356px">0.813</div>
<div class="t r" style="left:1133px;width:60px;top:473.5px;letter-spacing:-0.356px">1.212</div>
<div class="t r" style="left:1200px;width:60px;top:473.5px;letter-spacing:-0.356px">1.191</div>
<div class="hl" style="left:838px;top:509px;width:708px;background:#f0f0f0"></div>
<div class="cpu" style="left:859px;top:493px"></div>
<div class="t" style="left:876px;top:492.5px;letter-spacing:-0.425px">CPU Core</div>
<div class="t r" style="left:997px;width:62px;top:492.5px;letter-spacing:-0.356px">0.600</div>
<div class="t r" style="left:1066px;width:60px;top:492.5px;letter-spacing:-0.356px">0.578</div>
<div class="t r" style="left:1133px;width:60px;top:492.5px;letter-spacing:-0.356px">1.406</div>
<div class="t r" style="left:1200px;width:60px;top:492.5px;letter-spacing:-0.356px">1.374</div>
<div class="hl" style="left:838px;top:528px;width:708px;background:#f0f0f0"></div>
<div class="cpu" style="left:859px;top:512px"></div>
<div class="t" style="left:876px;top:511.5px;letter-spacing:-0.537px">CPU VDD</div>
<div class="t r" style="left:997px;width:62px;top:511.5px;letter-spacing:-0.356px">1.419</div>
<div class="t r" style="left:1066px;width:60px;top:511.5px;letter-spacing:-0.356px">1.313</div>
<div class="t r" style="left:1133px;width:60px;top:511.5px;letter-spacing:-0.356px">1.419</div>
<div class="t r" style="left:1200px;width:60px;top:511.5px;letter-spacing:-0.356px">1.334</div>
<div class="hl" style="left:838px;top:547px;width:708px;background:#f0f0f0"></div>
<div class="cpu" style="left:859px;top:531px"></div>
<div class="t" style="left:876px;top:530.5px;letter-spacing:-0.415px">CPU VDDNB</div>
<div class="t r" style="left:997px;width:62px;top:530.5px;letter-spacing:-0.356px">1.087</div>
<div class="t r" style="left:1066px;width:60px;top:530.5px;letter-spacing:-0.356px">1.081</div>
<div class="t r" style="left:1133px;width:60px;top:530.5px;letter-spacing:-0.356px">1.094</div>
<div class="t r" style="left:1200px;width:60px;top:530.5px;letter-spacing:-0.356px">1.084</div>
<div class="hl" style="left:838px;top:566px;width:708px;background:#f0f0f0"></div>
<svg class="a" style="left:858px;top:549px" width="16" height="16" viewBox="0 0 16 16"><circle cx="8" cy="8" r="6.300" fill="#fdf6ee" stroke="#b9845a" stroke-width="1.300"/><circle cx="8" cy="8" r="3.800" fill="#f0812a"/><path d="M9 4 L6.500 8.500 H8 L7.200 12 L10 7.500 H8.300 Z" fill="#ffe0b0"/></svg>
<div class="t" style="left:876px;top:549.5px;letter-spacing:0.006px">+5 V</div>
<div class="t r" style="left:997px;width:62px;top:549.5px;letter-spacing:-0.356px">5.041</div>
<div class="t r" style="left:1066px;width:60px;top:549.5px;letter-spacing:-0.356px">4.878</div>
<div class="t r" style="left:1133px;width:60px;top:549.5px;letter-spacing:-0.356px">5.069</div>
<div class="t r" style="left:1200px;width:60px;top:549.5px;letter-spacing:-0.356px">4.934</div>
<div class="hl" style="left:838px;top:585px;width:708px;background:#f0f0f0"></div>
<svg class="a" style="left:858px;top:568px" width="16" height="16" viewBox="0 0 16 16"><circle cx="8" cy="8" r="6.300" fill="#fdf6ee" stroke="#b9845a" stroke-width="1.300"/><circle cx="8" cy="8" r="3.800" fill="#f0812a"/><path d="M9 4 L6.500 8.500 H8 L7.200 12 L10 7.500 H8.300 Z" fill="#ffe0b0"/></svg>
<div class="t" style="left:876px;top:568.5px;letter-spacing:-0.075px">+12 V</div>
<div class="t r" style="left:997px;width:62px;top:568.5px;letter-spacing:-0.362px">12.099</div>
<div class="t r" style="left:1066px;width:60px;top:568.5px;letter-spacing:-0.362px">11.837</div>
<div class="t r" style="left:1133px;width:60px;top:568.5px;letter-spacing:-0.362px">12.164</div>
<div class="t r" style="left:1200px;width:60px;top:568.5px;letter-spacing:-0.362px">12.031</div>
<div class="hl" style="left:838px;top:604px;width:708px;background:#f0f0f0"></div>
<svg class="a" style="left:843px;top:587px" width="16" height="16" viewBox="0 0 16 16"><rect x="3" y="0.500" width="10" height="15" fill="#3c3c3c"/><rect x="1.500" y="1.500" width="1.500" height="13" fill="#8a8a8a"/><rect x="13" y="1.500" width="1.500" height="13" fill="#8a8a8a"/><rect x="5" y="3" width="6" height="10" fill="#585858"/></svg>
<div class="t" style="left:861px;top:587.5px;letter-spacing:-0.084px">Clocks</div>
<div class="hl" style="left:838px;top:623px;width:708px;background:#f0f0f0"></div>
<div class="cpu" style="left:859px;top:607px"></div>
<div class="t" style="left:876px;top:606.5px;letter-spacing:-0.248px">CPU Clock</div>
<div class="t r" style="left:997px;width:62px;top:606.5px;letter-spacing:-0.396px">2195</div>
<div class="t r" style="left:1066px;width:60px;top:606.5px;letter-spacing:-0.396px">2195</div>
<div class="t r" style="left:1133px;width:60px;top:606.5px;letter-spacing:-0.396px">4091</div>
<div class="t r" style="left:1200px;width:60px;top:606.5px;letter-spacing:-0.362px">3991.7</div>
<div class="hl" style="left:838px;top:642px;width:708px;background:#f0f0f0"></div>
<div class="cpu" style="left:859px;top:626px"></div>
<div class="t" style="left:876px;top:625.5px;letter-spacing:-0.196px">CPU Core #1 Clock</div>
<div class="t r" style="left:997px;width:62px;top:625.5px;letter-spacing:-0.396px">2195</div>
<div class="t r" style="left:1066px;width:60px;top:625.5px;letter-spacing:-0.396px">2195</div>
<div class="t r" style="left:1133px;width:60px;top:625.5px;letter-spacing:-0.396px">4091</div>
<div class="t r" style="left:1200px;width:60px;top:625.5px;letter-spacing:-0.362px">3991.7</div>
<div class="hl" style="left:838px;top:661px;width:708px;background:#f0f0f0"></div>
<div class="cpu" style="left:859px;top:645px"></div>
<div class="t" style="left:876px;top:644.5px;letter-spacing:-0.196px">CPU Core #2 Clock</div>
<div class="t r" style="left:997px;width:62px;top:644.5px;letter-spacing:-0.396px">2195</div>
<div class="t r" style="left:1066px;width:60px;top:644.5px;letter-spacing:-0.396px">2195</div>
<div class="t r" style="left:1133px;width:60px;top:644.5px;letter-spacing:-0.396px">4091</div>
<div class="t r" style="left:1200px;width:60px;top:644.5px;letter-spacing:-0.362px">3991.7</div>
<div class="hl" style="left:838px;top:680px;width:708px;background:#f0f0f0"></div>
<div class="cpu" style="left:859px;top:664px"></div>
<div class="t" style="left:876px;top:663.5px;letter-spacing:-0.196px">CPU Core #3 Clock</div>
<div class="t r" style="left:997px;width:62px;top:663.5px;letter-spacing:-0.396px">2195</div>
<div class="t r" style="left:1066px;width:60px;top:663.5px;letter-spacing:-0.396px">2195</div>
<div class="t r" style="left:1133px;width:60px;top:663.5px;letter-spacing:-0.396px">4091</div>
<div class="t r" style="left:1200px;width:60px;top:663.5px;letter-spacing:-0.362px">3991.7</div>
<div class="hl" style="left:838px;top:699px;width:708px;background:#f0f0f0"></div>
<div class="cpu" style="left:859px;top:683px"></div>
<div class="t" style="left:876px;top:682.5px;letter-spacing:-0.196px">CPU Core #4 Clock</div>
<div class="t r" style="left:997px;width:62px;top:682.5px;letter-spacing:-0.396px">2195</div>
<div class="t r" style="left:1066px;width:60px;top:682.5px;letter-spacing:-0.396px">2195</div>
<div class="t r" style="left:1133px;width:60px;top:682.5px;letter-spacing:-0.396px">4091</div>
<div class="t r" style="left:1200px;width:60px;top:682.5px;letter-spacing:-0.362px">3991.7</div>
<div class="hl" style="left:838px;top:718px;width:708px;background:#f0f0f0"></div>
<div class="cpu" style="left:859px;top:702px"></div>
<div class="t" style="left:876px;top:701.5px;letter-spacing:-0.196px">CPU Core #5 Clock</div>
<div class="t r" style="left:997px;width:62px;top:701.5px;letter-spacing:-0.396px">2195</div>
<div class="t r" style="left:1066px;width:60px;top:701.5px;letter-spacing:-0.396px">2195</div>
<div class="t r" style="left:1133px;width:60px;top:701.5px;letter-spacing:-0.396px">4091</div>
<div class="t r" style="left:1200px;width:60px;top:701.5px;letter-spacing:-0.362px">3991.7</div>
<div class="hl" style="left:838px;top:737px;width:708px;background:#f0f0f0"></div>
<div class="cpu" style="left:859px;top:721px"></div>
<div class="t" style="left:876px;top:720.5px;letter-spacing:-0.196px">CPU Core #6 Clock</div>
<div class="t r" style="left:997px;width:62px;top:720.5px;letter-spacing:-0.396px">2195</div>
<div class="t r" style="left:1066px;width:60px;top:720.5px;letter-spacing:-0.396px">2195</div>
<div class="t r" style="left:1133px;width:60px;top:720.5px;letter-spacing:-0.396px">4091</div>
<div class="t r" style="left:1200px;width:60px;top:720.5px;letter-spacing:-0.362px">3991.7</div>
<div class="hl" style="left:838px;top:756px;width:708px;background:#f0f0f0"></div>
<div class="cpu" style="left:859px;top:740px"></div>
<div class="t" style="left:876px;top:739.5px;letter-spacing:-0.196px">CPU Core #7 Clock</div>
<div class="t r" style="left:997px;width:62px;top:739.5px;letter-spacing:-0.396px">2195</div>
<div class="t r" style="left:1066px;width:60px;top:739.5px;letter-spacing:-0.396px">2195</div>
<div class="t r" style="left:1133px;width:60px;top:739.5px;letter-spacing:-0.396px">4091</div>
<div class="t r" style="left:1200px;width:60px;top:739.5px;letter-spacing:-0.362px">3991.7</div>
<div class="hl" style="left:838px;top:775px;width:708px;background:#f0f0f0"></div>
<div class="cpu" style="left:859px;top:759px"></div>
<div class="t" style="left:876px;top:758.5px;letter-spacing:-0.196px">CPU Core #8 Clock</div>
<div class="t r" style="left:997px;width:62px;top:758.5px;letter-spacing:-0.396px">2195</div>
<div class="t r" style="left:1066px;width:60px;top:758.5px;letter-spacing:-0.396px">2195</div>
<div class="t r" style="left:1133px;width:60px;top:758.5px;letter-spacing:-0.396px">4091</div>
<div class="t r" style="left:1200px;width:60px;top:758.5px;letter-spacing:-0.362px">3991.7</div>
<div class="hl" style="left:838px;top:794px;width:708px;background:#f0f0f0"></div>
<svg class="a" style="left:858px;top:777px" width="16" height="16" viewBox="0 0 16 16"><rect x="0" y="4" width="16" height="8" fill="#2f7a45"/><rect x="2" y="5.500" width="3" height="3.500" fill="#1d4d2a"/><rect x="6.500" y="5.500" width="3" height="3.500" fill="#1d4d2a"/><rect x="11" y="5.500" width="3" height="3.500" fill="#1d4d2a"/></svg>
<div class="t" style="left:876px;top:777.5px;letter-spacing:0.210px">Memory Clock</div>
<div class="t r" style="left:997px;width:62px;top:777.5px;letter-spacing:-0.396px">1597</div>
<div class="t r" style="left:1066px;width:60px;top:777.5px;letter-spacing:-0.396px">1597</div>
<div class="t r" style="left:1133px;width:60px;top:777.5px;letter-spacing:-0.396px">1597</div>
<div class="t r" style="left:1200px;width:60px;top:777.5px;letter-spacing:-0.362px">1596.7</div>
<div class="a" style="left:1546px;top:334px;width:17px;height:461px;background:#f0f0f0"></div>
<svg class="a" style="left:1549px;top:339px" width="11" height="10" viewBox="0 0 11 10"><path d="M1.500 7 L5.500 3 L9.500 7" stroke="#505050" stroke-width="1.6" fill="none"/></svg>
<svg class="a" style="left:1549px;top:782px" width="11" height="10" viewBox="0 0 11 10"><path d="M1.500 3 L5.500 7 L9.500 3" stroke="#505050" stroke-width="1.6" fill="none"/></svg>
<div class="a" style="left:1548px;top:353px;width:14px;height:408px;background:#c8c8c8"></div>
<div class="t" style="left:824px;top:827px;letter-spacing:0.067px">Remaining Battery:</div>
<div class="a" style="left:935px;top:824px;width:81px;height:24px;background:#000;color:#00b000;text-align:center;line-height:24px;font-weight:bold;font-size:10.5px">No battery</div>
<div class="t" style="left:1038px;top:827px;letter-spacing:-0.141px">Test Started:</div>
<div class="a" style="left:1114px;top:824px;width:140px;height:24px;background:#000"></div>
<div class="t" style="left:1277px;top:827px;letter-spacing:-0.193px">Elapsed Time:</div>
<div class="a" style="left:1362px;top:824px;width:80px;height:24px;background:#000"></div>
<div class="btn" style="left:809px;top:870.5px;width:73px;height:21px;"></div>
<div class="t c" style="left:809px;top:872.0px;width:73px;color:#000;letter-spacing:-0.057px">Start</div>
<div class="btn" style="left:890px;top:870.5px;width:73px;height:21px;background:#cccccc;border-color:#bfbfbf"></div>
<div class="t c" style="left:890px;top:872.0px;width:73px;color:#838383;letter-spacing:0.086px">Stop</div>
<div class="btn" style="left:994px;top:870.5px;width:73px;height:21px;border:2px solid #0078d7"></div>
<div class="t c" style="left:994px;top:872.0px;width:73px;color:#000;letter-spacing:-0.296px">Clear</div>
<div class="btn" style="left:1074px;top:870.5px;width:73px;height:21px;"></div>
<div class="t c" style="left:1074px;top:872.0px;width:73px;color:#000;letter-spacing:-0.553px">Save</div>
<div class="btn" style="left:1178px;top:870.5px;width:73px;height:21px;"></div>
<div class="t c" style="left:1178px;top:872.0px;width:73px;color:#000;letter-spacing:-0.556px">CPUID</div>
<div class="btn" style="left:1260px;top:870.5px;width:73px;height:21px;"></div>
<div class="t c" style="left:1260px;top:872.0px;width:73px;color:#000;letter-spacing:-0.091px">Preferences</div>
<div class="btn" style="left:1518px;top:870.5px;width:73px;height:21px;"></div>
<div class="t c" style="left:1518px;top:872.0px;width:73px;color:#000;letter-spacing:-0.280px">Close</div>
<div class="a" style="left:791px;top:0;width:7px;height:900px;background:linear-gradient(90deg,rgba(0,0,0,0),rgba(0,0,0,.22))"></div>
<div class="a" style="left:798px;top:0;width:3px;height:900px;background:#6e6e6e"></div>
<div class="a" id="linx" style="left:800px;top:0;width:516px;height:329px;background:#f0f0f0;border:1px solid #8a8a8a;box-shadow:0 3px 9px 1px rgba(0,0,0,.42)">
<div class="a" style="left:0;top:0;width:514px;height:51px;background:#fff"></div>
<svg class="a" style="left:8px;top:7px" width="18" height="18" viewBox="0 0 18 18"><circle cx="11" cy="7" r="4.500" fill="#fff" stroke="#3c9be8" stroke-width="2.4"/><rect x="1" y="10" width="7" height="7" fill="#d0d0d0"/></svg>
<div class="t sg" style="left:30px;top:8.500px;color:#999;letter-spacing:-0.010px">Finished - LinX v0.7.0</div>
<svg class="a" style="left:397px;top:11px" width="12" height="12" viewBox="0 0 12 12"><path d="M0 6 H10" stroke="#999" stroke-width="1.1" fill="none"/></svg>
<svg class="a" style="left:441px;top:11px" width="12" height="12" viewBox="0 0 12 12"><rect x="0.500" y="0.500" width="10" height="10" stroke="#ddd" fill="none"/></svg>
<svg class="a" style="left:487px;top:11px" width="12" height="12" viewBox="0 0 12 12"><path d="M0 0 L10.500 10.500 M10.500 0 L0 10.500" stroke="#999" stroke-width="1.1" fill="none"/></svg>
<div class="t sg" style="left:8px;top:32px;color:#6a6a6a;letter-spacing:-0.133px">File</div>
<div class="t sg" style="left:40px;top:32px;color:#6a6a6a;letter-spacing:0.056px">Settings</div>
<div class="t sg" style="left:95px;top:32px;color:#6a6a6a;letter-spacing:-0.119px">Graphs</div>
<div class="t sg" style="left:146px;top:32px;color:#6a6a6a;letter-spacing:-1.396px">?</div>
<div class="t" style="left:4px;top:59px;font-size:10.8px;letter-spacing:-0.186px">Problem size:</div>
<div class="a" style="left:72px;top:58px;width:62px;height:21px;background:#fff;border:1px solid #7a7a7a"></div>
<div class="t" style="left:76px;top:59px;font-size:10.8px">25854</div>
<svg class="a" style="left:119px;top:65px" width="10" height="8" viewBox="0 0 10 8"><path d="M1 2 L5 6 L9 2" stroke="#444" stroke-width="1.2" fill="none"/></svg>
<div class="t" style="left:168px;top:59px;font-size:10.8px;letter-spacing:-0.138px">Memory (MiB):</div>
<div class="a" style="left:241px;top:58px;width:56px;height:21px;background:#fff;border:1px solid #7a7a7a"></div>
<div class="t" style="left:245px;top:59px;font-size:10.8px">5120</div>
<svg class="a" style="left:282px;top:65px" width="10" height="8" viewBox="0 0 10 8"><path d="M1 2 L5 6 L9 2" stroke="#444" stroke-width="1.2" fill="none"/></svg>
<div class="t" style="left:307px;top:59px;font-size:10.8px">All</div>
<div class="t" style="left:372px;top:59px;font-size:10.8px">Run:</div>
<div class="a" style="left:399px;top:58px;width:51px;height:21px;background:#fff;border:1px solid #7a7a7a"></div>
<div class="t" style="left:403px;top:59px;font-size:10.8px">5</div>
<svg class="a" style="left:435px;top:65px" width="10" height="8" viewBox="0 0 10 8"><path d="M1 2 L5 6 L9 2" stroke="#444" stroke-width="1.2" fill="none"/></svg>
<div class="a" style="left:456px;top:58px;width:55px;height:21px;background:#e1e1e1;border:1px solid #adadad"></div>
<div class="t" style="left:460px;top:59px;font-size:10.8px;letter-spacing:-0.501px">times</div>
<svg class="a" style="left:496px;top:65px" width="10" height="8" viewBox="0 0 10 8"><path d="M1 2 L5 6 L9 2" stroke="#444" stroke-width="1.2" fill="none"/></svg>
<div class="btn" style="left:6px;top:84px;width:73px;height:23px"></div>
<div class="t c" style="left:6px;top:86.500px;width:73px;font-size:10.8px">Start</div>
<div class="a" style="left:86px;top:85px;width:342px;height:21px;background:#6399d4;border:1.500px solid #3a68a6"></div>
<div class="t c" style="left:86px;top:86.500px;width:342px;font-size:10.8px;letter-spacing:-0.002px">Finished without errors in 6 m 5 s</div>
<div class="btn" style="left:437px;top:84px;width:73px;height:23px;background:#cccccc;border-color:#bfbfbf"></div>
<div class="t c" style="left:436px;top:86.500px;width:74px;color:#8a8a8a;font-size:10.8px">Stop</div>
<div class="a" style="left:2px;top:110px;width:511px;height:199px;background:#fff"></div>
<div class="t" style="left:8px;top:116px;font-size:10.8px">#</div>
<div class="t c" style="left:28px;width:51px;top:116px;font-size:10.8px">Size</div>
<div class="t c" style="left:79px;width:49px;top:116px;font-size:10.8px">LDA</div>
<div class="t c" style="left:128px;width:40px;top:116px;font-size:10.8px">Align</div>
<div class="t c" style="left:168px;width:67px;top:116px;font-size:10.8px">Time</div>
<div class="t c" style="left:235px;width:69px;top:116px;font-size:10.8px">GFlops</div>
<div class="t c" style="left:304px;width:96px;top:116px;font-size:10.8px;letter-spacing:-0.166px">Residual</div>
<div class="t c" style="left:400px;width:97px;top:116px;font-size:10.8px;letter-spacing:0.036px">Residual (norm.)</div>
<div class="vl" style="left:28px;top:110px;height:199px;background:#ececec"></div>
<div class="vl" style="left:79px;top:110px;height:199px;background:#ececec"></div>
<div class="vl" style="left:128px;top:110px;height:199px;background:#ececec"></div>
<div class="vl" style="left:168px;top:110px;height:199px;background:#ececec"></div>
<div class="vl" style="left:235px;top:110px;height:199px;background:#ececec"></div>
<div class="vl" style="left:304px;top:110px;height:199px;background:#ececec"></div>
<div class="vl" style="left:400px;top:110px;height:199px;background:#ececec"></div>
<div class="vl" style="left:497px;top:110px;height:199px;background:#ececec"></div>
<div class="a" style="left:2px;top:137.5px;width:496px;height:17px;background:#dcdcdc"></div>
<div class="hl" style="left:2px;top:154.5px;width:511px;background:#efefef"></div>
<div class="hl" style="left:2px;top:171.5px;width:511px;background:#efefef"></div>
<div class="hl" style="left:2px;top:188.5px;width:511px;background:#efefef"></div>
<div class="hl" style="left:2px;top:205.5px;width:511px;background:#efefef"></div>
<div class="hl" style="left:2px;top:222.5px;width:511px;background:#efefef"></div>
<div class="hl" style="left:2px;top:239.5px;width:511px;background:#efefef"></div>
<div class="hl" style="left:2px;top:256.5px;width:511px;background:#efefef"></div>
<div class="hl" style="left:2px;top:273.5px;width:511px;background:#efefef"></div>
<div class="hl" style="left:2px;top:290.5px;width:511px;background:#efefef"></div>
<div class="hl" style="left:2px;top:307.5px;width:511px;background:#efefef"></div>
<div class="t" style="left:8px;top:137.5px;line-height:17px;height:17px;font-size:10.8px">1</div>
<div class="t c" style="left:28px;width:51px;top:137.5px;line-height:17px;height:17px;font-size:10.8px">25854</div>
<div class="t c" style="left:79px;width:49px;top:137.5px;line-height:17px;height:17px;font-size:10.8px">25864</div>
<div class="t c" style="left:128px;width:40px;top:137.5px;line-height:17px;height:17px;font-size:10.8px">4</div>
<div class="t c" style="left:168px;width:67px;top:137.5px;line-height:17px;height:17px;font-size:10.8px">47.399</div>
<div class="t c" style="left:235px;width:69px;top:137.5px;line-height:17px;height:17px;font-size:10.8px">243.0924</div>
<div class="t c" style="left:304px;width:96px;top:137.5px;line-height:17px;height:17px;font-size:10.8px;letter-spacing:-0.055px">5.556089e-10</div>
<div class="t c" style="left:400px;width:97px;top:137.5px;line-height:17px;height:17px;font-size:10.8px;letter-spacing:-0.055px">2.949507e-02</div>
<div class="t" style="left:8px;top:154.5px;line-height:17px;height:17px;font-size:10.8px">2</div>
<div class="t c" style="left:28px;width:51px;top:154.5px;line-height:17px;height:17px;font-size:10.8px">25854</div>
<div class="t c" style="left:79px;width:49px;top:154.5px;line-height:17px;height:17px;font-size:10.8px">25864</div>
<div class="t c" style="left:128px;width:40px;top:154.5px;line-height:17px;height:17px;font-size:10.8px">4</div>
<div class="t c" style="left:168px;width:67px;top:154.5px;line-height:17px;height:17px;font-size:10.8px">47.408</div>
<div class="t c" style="left:235px;width:69px;top:154.5px;line-height:17px;height:17px;font-size:10.8px">243.0449</div>
<div class="t c" style="left:304px;width:96px;top:154.5px;line-height:17px;height:17px;font-size:10.8px;letter-spacing:-0.055px">5.556089e-10</div>
<div class="t c" style="left:400px;width:97px;top:154.5px;line-height:17px;height:17px;font-size:10.8px;letter-spacing:-0.055px">2.949507e-02</div>
<div class="t" style="left:8px;top:171.5px;line-height:17px;height:17px;font-size:10.8px">3</div>
<div class="t c" style="left:28px;width:51px;top:171.5px;line-height:17px;height:17px;font-size:10.8px">25854</div>
<div class="t c" style="left:79px;width:49px;top:171.5px;line-height:17px;height:17px;font-size:10.8px">25864</div>
<div class="t c" style="left:128px;width:40px;top:171.5px;line-height:17px;height:17px;font-size:10.8px">4</div>
<div class="t c" style="left:168px;width:67px;top:171.5px;line-height:17px;height:17px;font-size:10.8px">47.407</div>
<div class="t c" style="left:235px;width:69px;top:171.5px;line-height:17px;height:17px;font-size:10.8px">243.0539</div>
<div class="t c" style="left:304px;width:96px;top:171.5px;line-height:17px;height:17px;font-size:10.8px;letter-spacing:-0.055px">5.556089e-10</div>
<div class="t c" style="left:400px;width:97px;top:171.5px;line-height:17px;height:17px;font-size:10.8px;letter-spacing:-0.055px">2.949507e-02</div>
<div class="t" style="left:8px;top:188.5px;line-height:17px;height:17px;font-size:10.8px">4</div>
<div class="t c" style="left:28px;width:51px;top:188.5px;line-height:17px;height:17px;font-size:10.8px">25854</div>
<div class="t c" style="left:79px;width:49px;top:188.5px;line-height:17px;height:17px;font-size:10.8px">25864</div>
<div class="t c" style="left:128px;width:40px;top:188.5px;line-height:17px;height:17px;font-size:10.8px">4</div>
<div class="t c" style="left:168px;width:67px;top:188.5px;line-height:17px;height:17px;font-size:10.8px">47.483</div>
<div class="t c" style="left:235px;width:69px;top:188.5px;line-height:17px;height:17px;font-size:10.8px">242.6628</div>
<div class="t c" style="left:304px;width:96px;top:188.5px;line-height:17px;height:17px;font-size:10.8px;letter-spacing:-0.055px">5.556089e-10</div>
<div class="t c" style="left:400px;width:97px;top:188.5px;line-height:17px;height:17px;font-size:10.8px;letter-spacing:-0.055px">2.949507e-02</div>
<div class="t" style="left:8px;top:205.5px;line-height:17px;height:17px;font-size:10.8px">5</div>
<div class="t c" style="left:28px;width:51px;top:205.5px;line-height:17px;height:17px;font-size:10.8px">25854</div>
<div class="t c" style="left:79px;width:49px;top:205.5px;line-height:17px;height:17px;font-size:10.8px">25864</div>
<div class="t c" style="left:128px;width:40px;top:205.5px;line-height:17px;height:17px;font-size:10.8px">4</div>
<div class="t c" style="left:168px;width:67px;top:205.5px;line-height:17px;height:17px;font-size:10.8px">47.423</div>
<div class="t c" style="left:235px;width:69px;top:205.5px;line-height:17px;height:17px;font-size:10.8px">242.9715</div>
<div class="t c" style="left:304px;width:96px;top:205.5px;line-height:17px;height:17px;font-size:10.8px;letter-spacing:-0.055px">5.556089e-10</div>
<div class="t c" style="left:400px;width:97px;top:205.5px;line-height:17px;height:17px;font-size:10.8px;letter-spacing:-0.055px">2.949507e-02</div>
<div class="a" style="left:0;top:309px;width:514px;height:18px;background:#f0f0f0"></div>
<div class="t c" style="left:0px;width:54px;top:310px;font-size:10.8px;letter-spacing:-0.071px">5/5</div>
<div class="t c" style="left:54px;width:46px;top:310px;font-size:10.8px;letter-spacing:0.131px">64-bit</div>
<div class="vl" style="left:54px;top:311px;height:14px;background:#d7d7d7"></div>
<div class="t c" style="left:100px;width:65px;top:310px;font-size:10.8px;letter-spacing:-0.263px">16 Threads</div>
<div class="vl" style="left:100px;top:311px;height:14px;background:#d7d7d7"></div>
<div class="t c" style="left:165px;width:151px;top:310px;font-size:10.8px;letter-spacing:-0.174px">243.0924 GFlops Peak</div>
<div class="vl" style="left:165px;top:311px;height:14px;background:#d7d7d7"></div>
<div class="t c" style="left:316px;width:167px;top:310px;font-size:10.8px;letter-spacing:-0.195px">AMD Ryzen 7 2700X Eight-Core</div>
<div class="vl" style="left:316px;top:311px;height:14px;background:#d7d7d7"></div>
<div class="t c" style="left:483px;width:31px;top:310px;font-size:10.8px">Log ›</div>
<div class="vl" style="left:483px;top:311px;height:14px;background:#d7d7d7"></div>
</div>
<div class="a" style="left:0;top:0;width:1600px;height:2px;background:#3a3a3a"></div>
<div class="a" style="left:0;top:898px;width:1600px;height:2px;background:#4a4a4a"></div>
<div class="a" style="left:0;top:0;width:2px;height:900px;background:#b0b0b0"></div>
</div></body></html>
